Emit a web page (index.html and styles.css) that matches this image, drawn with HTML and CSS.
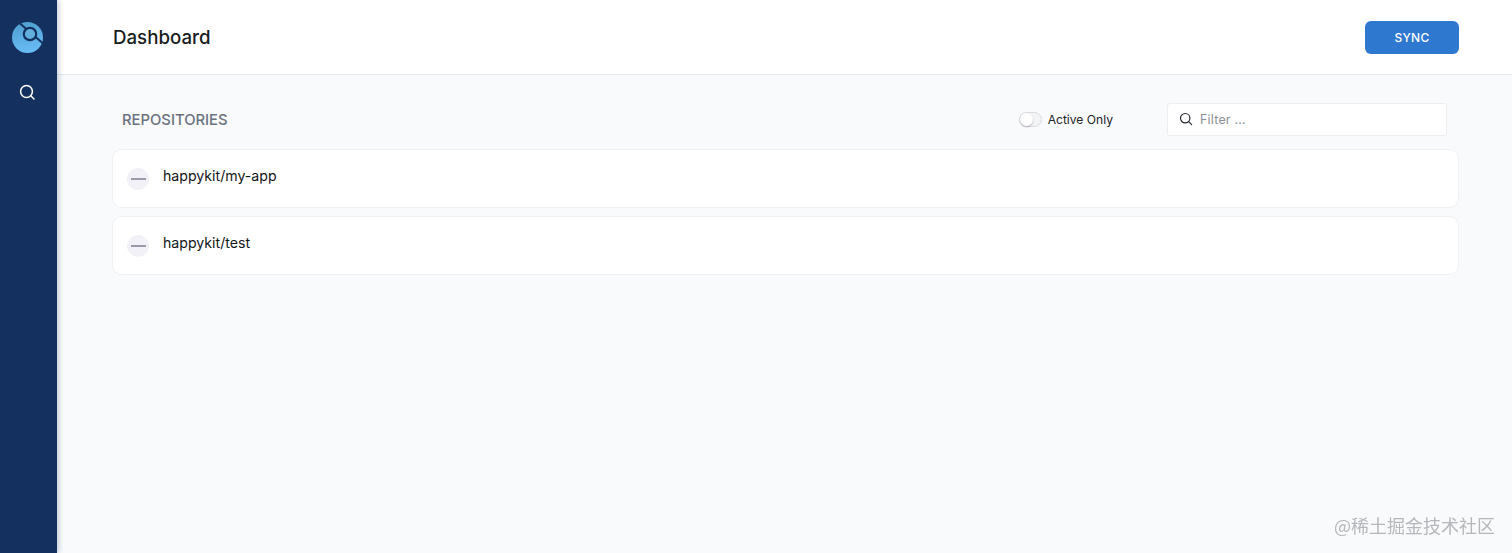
FILE: index.html
```html
<!DOCTYPE html>
<html lang="en">
<head>
<meta charset="utf-8">
<title>Dashboard</title>
<link rel="stylesheet" href="styles.css">
</head>
<body>
<div class="app">
  <aside class="sidebar">
    <svg class="logo" width="32" height="32" viewBox="0 0 32 32">
      <defs>
        <linearGradient id="lg" x1="0.3" y1="0" x2="0.5" y2="1">
          <stop offset="0" stop-color="#4f9fcf"/>
          <stop offset="1" stop-color="#68bdf6"/>
        </linearGradient>
      </defs>
      <circle cx="15.5" cy="15.5" r="15.5" fill="url(#lg)"/>
      <path d="M8 1.5 L30.5 21" stroke="#14305f" stroke-width="2" fill="none"/>
      <circle cx="18" cy="12" r="6.2" fill="#62aedd" stroke="#14305f" stroke-width="2.2"/>
    </svg>
    <svg class="nav-icon" width="18" height="18" viewBox="0 0 18 18" fill="none" stroke="#fff" stroke-width="1.5" stroke-linecap="round">
      <circle cx="7.5" cy="8.5" r="5.9"/>
      <path d="M11.8 12.8 L15 16"/>
    </svg>
  </aside>
  <div class="main">
    <header class="topbar">
      <h1 class="title">Dashboard</h1>
      <button class="sync">SYNC</button>
    </header>
    <section class="content">
      <div class="toolbar">
        <h2 class="section-title">REPOSITORIES</h2>
        <div class="controls">
          <label class="toggle-wrap">
            <span class="toggle"><span class="knob"></span></span>
            <span class="toggle-label">Active Only</span>
          </label>
          <div class="filter">
            <svg width="14" height="14" viewBox="0 0 14 14" fill="none" stroke="#24292f" stroke-width="1.2" stroke-linecap="round">
              <circle cx="6.2" cy="6.2" r="4.7"/>
              <path d="M9.7 9.7 L12.6 12.6"/>
            </svg>
            <span class="placeholder">Filter ...</span>
          </div>
        </div>
      </div>
      <ul class="repos">
        <li class="repo"><span class="status"><span class="dash"></span></span><span class="repo-name">happykit/my-app</span></li>
        <li class="repo"><span class="status"><span class="dash"></span></span><span class="repo-name">happykit/test</span></li>
      </ul>
    </section>
  </div>
</div>
<div class="watermark">@稀土掘金技术社区</div>
</body>
</html>
```
FILE: styles.css
```css
* { box-sizing: border-box; }
html, body { margin: 0; height: 100%; }
body { font-family: Inter, "Liberation Sans", "Noto Sans CJK SC", sans-serif; background: #f9fafc; overflow: hidden; }
.app { display: flex; height: 553px; }
.sidebar {
  width: 57px; flex: none; background: #14305f; display: flex; flex-direction: column; align-items: center;
  padding-top: 22px; padding-right: 1px; gap: 29px; box-shadow: 2px 0 5px rgba(20,40,80,.22); position: relative; z-index: 1;
}
.logo { display: block; }
.nav-icon { display: block; }
.main { flex: 1; min-width: 0; display: flex; flex-direction: column; }
.topbar {
  height: 75px; background: #fff; border-bottom: 1px solid #e5e7eb; display: flex; align-items: center;
  justify-content: space-between; padding: 0 53px 0 56px;
}
.title { margin: 0; font-size: 18.7px; font-weight: 500; color: #1a1d21; }
.sync {
  width: 94px; height: 33px; border: 0; border-radius: 6px; background: #2f78cf; color: #fff;
  font: 500 12px Inter, sans-serif; letter-spacing: .2px; margin-top: 0;
}
.content { flex: 1; padding: 27px 53px 0 55px; }
.toolbar { display: flex; align-items: center; justify-content: space-between; height: 34px; padding: 0 12px 0 10px; }
.section-title { margin: 2px 0 0; font-size: 14.8px; font-weight: 500; color: #6b7280; }
.controls { display: flex; align-items: center; gap: 54px; }
.toggle-wrap { display: flex; align-items: center; gap: 6px; }
.toggle { width: 23px; height: 15px; border-radius: 8px; background: #f3f4f6; border: 1px solid #d9dce1; display: block; position: relative; }
.knob { position: absolute; left: 0; top: 0; width: 13px; height: 13px; border-radius: 50%; background: #fff; box-shadow: 0 1px 2px rgba(0,0,0,.25); }
.toggle-label { font-size: 12.1px; font-weight: 400; color: #1f2429; }
.filter {
  width: 280px; height: 33px; background: #fff; border: 1px solid #eceef1; border-radius: 3px;
  display: flex; align-items: center; gap: 7px; padding-left: 11px;
}
.filter svg { display: block; }
.placeholder { font-size: 12.5px; color: #8b8f98; letter-spacing: .2px; }
.repos { list-style: none; margin: 13px 0 0; padding: 0; display: flex; flex-direction: column; gap: 8px; }
.repo {
  height: 59px; background: #fff; border: 1px solid #f0f1f4; border-radius: 10px; display: flex; align-items: center;
  padding: 0 0 0 14px; gap: 14px;
}
.status { width: 22px; height: 22px; border-radius: 50%; background: #f2f1f8; display: flex; align-items: center; justify-content: center; }
.dash { width: 15px; height: 2px; background: #9a9aa8; }
.repo-name { font-size: 14.15px; font-weight: 400; color: #14171a; margin-top: -7px; }
.watermark { position: fixed; right: 17px; top: 512px; font-size: 18px; color: #b5b7ba; font-family: "Noto Sans CJK SC", sans-serif; letter-spacing: 0; }
```
